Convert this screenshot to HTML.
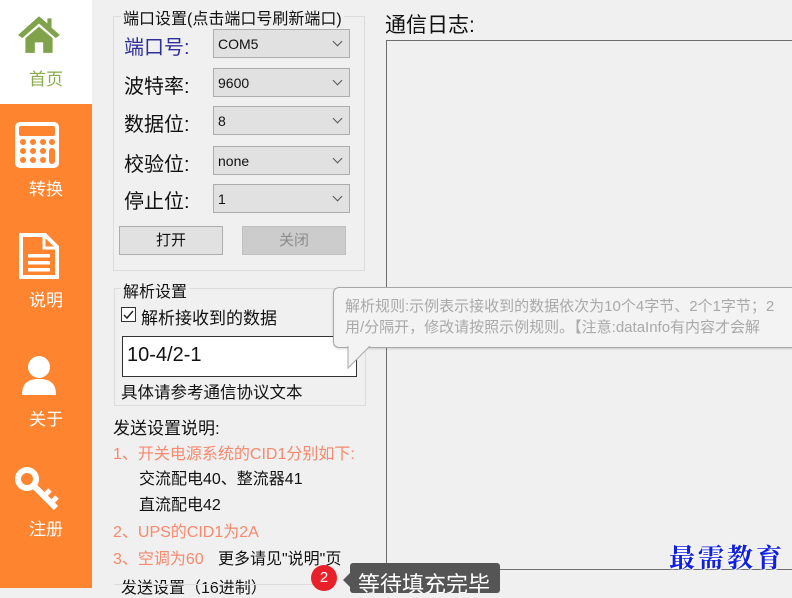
<!DOCTYPE html>
<html><head><meta charset="utf-8"><style>
*{margin:0;padding:0;box-sizing:border-box}
body{width:792px;height:588px;overflow:hidden;background:#f0f0f0;font-family:"Liberation Sans","Noto Sans CJK SC",sans-serif;position:relative;color:#111}
.a{position:absolute;white-space:nowrap}
.side{left:0;top:0;width:92px;height:588px;background:#fe842f}
.home{left:0;top:0;width:92px;height:104px;background:#fff}
.st{color:#fff;font-size:17px;width:92px;text-align:center;left:0}
.gb{border:1px solid #dcdcdc}
.gt{background:#f0f0f0;font-size:16px;padding:0 2px}
.lbl{font-size:20px;left:124px}
.cb{left:213px;width:137px;height:29px;background:#e1e1e1;border:1px solid #adadad;font-size:14px;padding:6px 0 0 4px}
.cb:after{content:"";position:absolute;right:8px;top:8px;width:6px;height:6px;border-right:1.3px solid #555;border-bottom:1.3px solid #555;transform:rotate(45deg)}
.btn{height:29px;border:1px solid #adadad;font-size:15px;text-align:center;line-height:27px}
.red{color:#f7896e;font-size:16px}
.blk{font-size:16px}
</style></head><body>
<div class="a side"></div>
<div class="a home"></div>
<svg class="a" style="left:16px;top:14px" width="46" height="40" viewBox="0 0 44 38"><path d="M22 2 L2 20 L6 23 L22 9 L38 23 L42 20 L34 13 L34 4 L30 4 L30 9 Z" fill="#7fa24a"/><path d="M9 23 L22 12 L35 23 L35 37 L26 37 L26 27 L18 27 L18 37 L9 37 Z" fill="#7fa24a"/></svg>
<div class="a st" style="top:65px;color:#8aab4d">首页</div>
<svg class="a" style="left:14px;top:121px" width="46" height="48" viewBox="0 0 46 48"><rect x="1" y="1" width="44" height="46" rx="5" fill="#fff"/><rect x="5" y="5" width="36" height="10" rx="2" fill="#fe842f"/><g fill="#fe842f"><circle cx="9" cy="21" r="3"/><circle cx="19" cy="21" r="3"/><circle cx="29" cy="21" r="3"/><circle cx="38" cy="21" r="3"/><circle cx="9" cy="30" r="3"/><circle cx="19" cy="30" r="3"/><circle cx="29" cy="30" r="3"/><circle cx="9" cy="39" r="3"/><circle cx="19" cy="39" r="3"/><circle cx="29" cy="39" r="3"/><rect x="35" y="27" width="6" height="16" rx="3"/></g></svg>
<div class="a st" style="top:175px">转换</div>
<svg class="a" style="left:18px;top:232px" width="42" height="48" viewBox="0 0 42 48"><path d="M3 3 H27 L39 15 V45 H3 Z" fill="none" stroke="#fff" stroke-width="4"/><path d="M26 3 V16 H39" fill="none" stroke="#fff" stroke-width="3"/><rect x="10" y="22" width="22" height="3.5" fill="#fff"/><rect x="10" y="29" width="22" height="3.5" fill="#fff"/><rect x="10" y="36" width="22" height="3.5" fill="#fff"/></svg>
<div class="a st" style="top:286px">说明</div>
<svg class="a" style="left:21px;top:355px" width="36" height="42" viewBox="0 0 36 42"><circle cx="18" cy="12" r="11" fill="#fff"/><path d="M1 40 C1 28 7 24 18 24 C29 24 35 28 35 40 Z" fill="#fff"/></svg>
<div class="a st" style="top:405px">关于</div>
<svg class="a" style="left:14px;top:466px" width="48" height="46" viewBox="0 0 48 46"><circle cx="13" cy="13" r="9" fill="none" stroke="#fff" stroke-width="6"/><path d="M19 19 L42 42" stroke="#fff" stroke-width="6"/><path d="M30 30 L36 24 M37 37 L43 31" stroke="#fff" stroke-width="5"/></svg>
<div class="a st" style="top:515px">注册</div>

<div class="a gb" style="left:113px;top:16px;width:252px;height:255px"></div>
<div class="a gt" style="left:121px;top:5px">端口设置(点击端口号刷新端口)</div>
<div class="a lbl" style="top:31px;color:#2f2f9a">端口号:</div>
<div class="a lbl" style="top:70px">波特率:</div>
<div class="a lbl" style="top:108px">数据位:</div>
<div class="a lbl" style="top:148px">校验位:</div>
<div class="a lbl" style="top:185px">停止位:</div>
<div class="a cb" style="top:29px">COM5</div>
<div class="a cb" style="top:68px">9600</div>
<div class="a cb" style="top:106px">8</div>
<div class="a cb" style="top:146px">none</div>
<div class="a cb" style="top:184px">1</div>
<div class="a btn" style="left:119px;top:226px;width:104px;background:#e1e1e1">打开</div>
<div class="a btn" style="left:242px;top:226px;width:104px;background:#cccccc;color:#8c8c8c;border-color:#bfbfbf">关闭</div>

<div class="a gb" style="left:114px;top:288px;width:252px;height:118px"></div>
<div class="a gt" style="left:121px;top:278px">解析设置</div>
<div class="a" style="left:121px;top:307px;width:15px;height:15px;border:1px solid #333;background:#fff"></div>
<svg class="a" style="left:122px;top:308px" width="13" height="13"><path d="M2 7 L5 10 L11 3" fill="none" stroke="#222" stroke-width="1.5"/></svg>
<div class="a" style="left:141px;top:304px;font-size:17px">解析接收到的数据</div>
<div class="a" style="left:122px;top:336px;width:235px;height:41px;background:#fff;border:1px solid #333;font-size:20px;padding:7px 0 0 4px">10-4/2-1</div>
<div class="a" style="left:121px;top:379px;font-size:16.5px">具体请参考通信协议文本</div>

<div class="a" style="left:113px;top:414px;font-size:17px">发送设置说明:</div>
<div class="a red" style="left:113px;top:440px">1、开关电源系统的CID1分别如下:</div>
<div class="a blk" style="left:139px;top:465px">交流配电40、整流器41</div>
<div class="a blk" style="left:139px;top:491px">直流配电42</div>
<div class="a red" style="left:113px;top:518px">2、UPS的CID1为2A</div>
<div class="a red" style="left:113px;top:545px">3、空调为60</div>
<div class="a blk" style="left:218px;top:545px">更多请见"说明"页</div>
<div class="a" style="left:121px;top:574px;font-size:16px">发送设置（16进制）</div>
<div class="a" style="left:114px;top:584px;width:200px;height:1px;background:#dcdcdc"></div>

<div class="a" style="left:385px;top:9px;font-size:21px">通信日志:</div>
<div class="a" style="left:386px;top:40px;width:410px;height:530px;border:1px solid #6e6e6e;border-right:none;background:#f0f0f0"></div>

<div class="a" style="left:333px;top:287px;width:470px;height:61px;background:#f3f3f3;border:1px solid #a8a8a8;border-radius:6px;box-shadow:0 1px 2px rgba(0,0,0,.15)"></div>
<svg class="a" style="left:345px;top:346px" width="30" height="24"><path d="M3 0 L3 22 L25 0" fill="#f3f3f3" stroke="#a8a8a8"/><path d="M4 -1 H24" stroke="#f3f3f3" stroke-width="2"/></svg>
<div class="a" style="left:345px;top:296px;font-size:15px;color:#a9a9a9;line-height:21px">解析规则:示例表示接收到的数据依次为10个4字节、2个1字节；2<br>用/分隔开，修改请按照示例规则。【注意:dataInfo有内容才会解</div>

<div class="a" style="left:311px;top:565px;width:26px;height:26px;border-radius:50%;background:#e8202a;color:#fff;font-size:15px;text-align:center;line-height:26px">2</div>
<svg class="a" style="left:342px;top:572px" width="10" height="16"><path d="M9 0 L1 8 L9 16 Z" fill="#555"/></svg>
<div class="a" style="left:350px;top:563px;width:150px;height:30px;background:#555;border-radius:3px;color:#fff;font-size:22px;padding:4px 0 0 8px;overflow:hidden">等待填充完毕</div>

<div class="a" style="left:669px;top:538px;font-family:'Noto Serif CJK SC',serif;font-weight:bold;font-size:26px;color:#1020e0;letter-spacing:3px;text-shadow:0 0 2px #fff,0 0 2px #fff,1px 1px 1px #fff">最需教育</div>
</body></html>
